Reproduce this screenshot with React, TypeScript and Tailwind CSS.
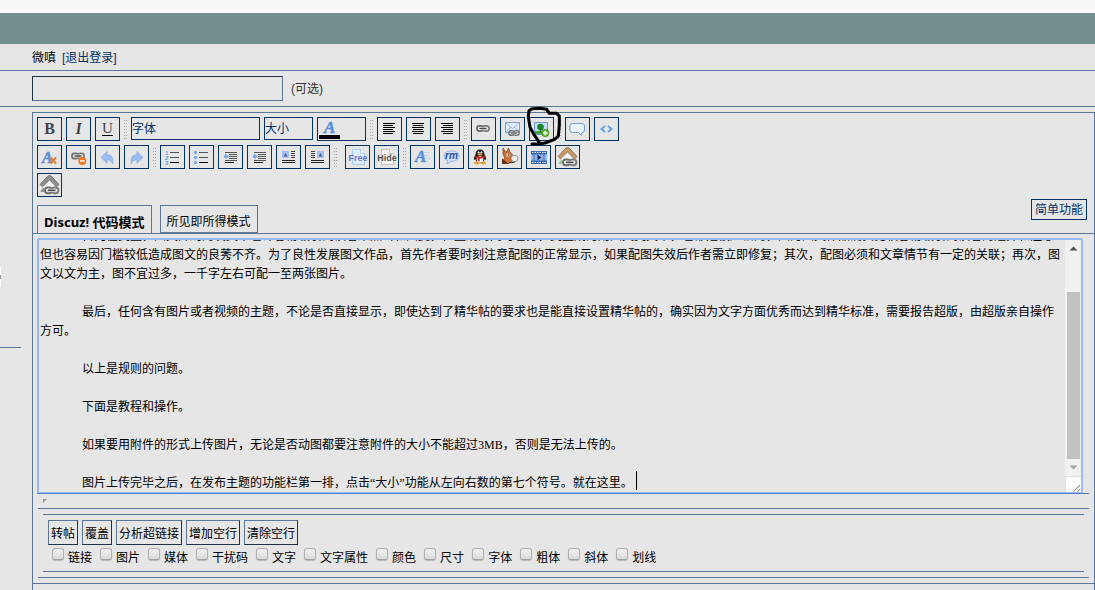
import React, { useEffect, useRef } from 'react';

const draft = [
  '　　　\u2002首先在类型，图文开局的发文不也许容易吸引到读者来点击和回复，但直观的同时也分，类型成为用图文类文本，也都是被严格的，因为图文作品确实比较容易吸引到读者的选择和注意',
  '但也容易因门槛较低造成图文的良莠不齐。为了良性发展图文作品，首先作者要时刻注意配图的正常显示，如果配图失效后作者需立即修复；其次，配图必须和文章情节有一定的关联；再次，图文以文为主，图不宜过多，一千字左右可配一至两张图片。',
  '',
  '　　　\u2002最后，任何含有图片或者视频的主题，不论是否直接显示，即使达到了精华帖的要求也是能直接设置精华帖的，确实因为文字方面优秀而达到精华标准，需要报告超版，由超版亲自操作方可。',
  '',
  '　　　\u2002以上是规则的问题。',
  '',
  '　　　\u2002下面是教程和操作。',
  '',
  '　　　\u2002如果要用附件的形式上传图片，无论是否动图都要注意附件的大小不能超过3MB，否则是无法上传的。',
  '',
  '　　　\u2002图片上传完毕之后，在发布主题的功能栏第一排，点击“大小”功能从左向右数的第七个符号。就在这里。',
].join('\n');

const filters = ['链接', '图片', '媒体', '干扰码', '文字', '文字属性', '颜色', '尺寸', '字体', '粗体', '斜体', '划线'];
const actions = ['转帖', '覆盖', '分析超链接', '增加空行', '清除空行'];

const Icon: React.FC<{ children: React.ReactNode }> = ({ children }) => (
  <svg viewBox="0 0 23 22" className="block h-[22px] w-[23px]" aria-hidden="true">{children}</svg>
);

const Tool: React.FC<{ title: string; children: React.ReactNode }> = ({ title, children }) => (
  <button type="button" title={title} className="h-6 w-[25px] shrink-0 border border-[#003366] overflow-hidden">
    {children}
  </button>
);

const Divider = () => (
  <svg width="3" height="20" className="mt-[3px] shrink-0" aria-hidden="true">
    {[0, 3, 6, 9, 12, 15, 18].map(y => (
      <g key={y} fill="#a9a9a9">
        <rect x="0" y={y} width="1" height="1" />
        <rect x="2" y={y} width="1" height="1" />
      </g>
    ))}
  </svg>
);

const Chain: React.FC<{ x: number; y: number; s?: number }> = ({ x, y, s = 1 }) => (
  <g transform={`translate(${x} ${y}) scale(${s})`} fill="none">
    <rect x="0.9" y="0.9" width="6.4" height="5.2" rx="2.5" stroke="#6d6d6d" strokeWidth="1.7" />
    <rect x="6.7" y="0.9" width="6.4" height="5.2" rx="2.5" stroke="#7b7b7b" strokeWidth="1.7" />
    <path d="M3.5 3.5h7" stroke="#f4f4f4" strokeWidth="2.6" />
    <path d="M3.5 3.5h7" stroke="#4a4a4a" strokeWidth="1.5" />
  </g>
);

const AlignIcon: React.FC<{ align: 'left' | 'center' | 'right' }> = ({ align }) => (
  <Icon>
    {[12, 10, 12, 10, 12, 10].map((w, i) => {
      const x = align === 'left' ? 5 : align === 'center' ? 5 + (12 - w) / 2 : 17 - w;
      return <rect key={i} x={x} y={5 + i * 2} width={w} height="1" fill="#000" />;
    })}
  </Icon>
);

const BlueA: React.FC<{ x: number; y: number; size: number }> = ({ x, y, size }) => (
  <text x={x} y={y} fontFamily="Liberation Serif, serif" fontStyle="italic" fontWeight="bold" fontSize={size} fill="#5b8fdc" stroke="#5b8fdc" strokeWidth="0.5">A</text>
);

const IndentIcon = () => (
  <Icon>
    <path d="M6 6.5h12M10 8.5h8M10 10.5h8M10 12.5h8M6 14.5h12" stroke="#555" />
    <path d="M6 16.5h9" stroke="#111" />
    <path d="M4.500 10.500l3-3v2h2v2h-2v2z" fill="#6ba5ee" />
  </Icon>
);

const FloatIcon: React.FC<{ right?: boolean }> = ({ right }) => (
  <Icon>
    <rect x={right ? 11 : 5} y="5" width="7" height="7" fill="#a3c0ef" />
    <path d={right ? 'M12.500 10.500l2-3.500 2 3.500z' : 'M6.500 10.500l2-3.500 2 3.500z'} fill="#48629a" />
    <path d={right ? 'M5 5.500h4M5 7.500h4M5 9.500h4M5 11.500h4' : 'M14 5.500h4M14 7.500h4M14 9.500h4M14 11.500h4'} stroke="#444" />
    <path d="M5 14.500h13M5 16.500h13" stroke="#222" />
  </Icon>
);

const PageIcon: React.FC<{ label: string; color: string; edge: string; fill: string }> = ({ label, color, edge, fill }) => (
  <Icon>
    <path d="M6.500 3.500h8l4 4v11h-12z" fill={fill} stroke={edge} strokeLinejoin="round" />
    <path d="M14.500 3.500v4h4" fill="#fff" stroke={edge} />
    <text x="12" y="15" textAnchor="middle" fontFamily="Liberation Sans, sans-serif" fontWeight="bold" fontSize="9" fill={color}>{label}</text>
  </Icon>
);

const ListIcon: React.FC<{ numbered?: boolean }> = ({ numbered }) => (
  <Icon>
    {[6, 11, 16].map((y, i) => (
      <g key={y}>
        {numbered
          ? <text x="4" y={y + 3} fontFamily="Liberation Sans, sans-serif" fontWeight="bold" fontSize="6" fill="#5f9de6">{i + 1}</text>
          : <rect x="4" y={y - 1} width="3" height="3" rx="1" fill="#77aaf0" />}
        <rect x="9" y={y} width="9" height="1" fill={i === 2 ? '#000' : '#555'} />
      </g>
    ))}
  </Icon>
);

const HouseIcon: React.FC<{ roof: string; edge: string; leaf: string }> = ({ roof, edge, leaf }) => (
  <Icon>
    <path d="M5 11l6.500-7 6.500 7v6H5z" fill="#f3f3f3" />
    <path d="M2 17.500l4-4v4.500z" fill={leaf} />
    <path d="M2 10.500L10 1.800h3L21 10.500l-2.500 2.300-7-6.800-7 6.800z" fill={roof} stroke={edge} strokeWidth="0.800" />
    <Chain x={6} y={12.5} s={1.1} />
  </Icon>
);

const arrow = 'M5 11.500L11 5.500v3.200c4.500 0 7 3 5.500 9.300-.8-2.800-2.500-4.200-5.500-4.200v3.500z';

const App: React.FC = () => {
  const editor = useRef<HTMLTextAreaElement>(null);

  // keep the end of the draft in view
  useEffect(() => {
    const el = editor.current;
    if (el) el.scrollTop = el.scrollHeight - el.clientHeight - 1;
  }, []);

  return (
    <div className="flex min-h-screen flex-col bg-[#e6e6e6] font-['Liberation_Sans','Noto_Sans_CJK_SC',sans-serif] text-[12px] leading-4 text-black">
      <div className="h-[13px] bg-[#f8f8f8]" />
      <div className="h-[31px] bg-[#748f8f]" />
      <div className="flex h-[27px] items-center gap-1.5 border-b border-[#5a7799] pt-0.5 pl-8">
        <span>微嗔</span>
        <a href="#logout" className="text-[#003366]">[退出登录]</a>
      </div>
      <div className="flex h-9 items-center gap-2 border-b border-[#5a7799] pl-8">
        <input
          type="text" aria-label="标题"
          className="h-[25px] w-[251px] border border-t-[#1f3345] border-l-[#1f3345] border-r-[#5a7799] border-b-[#5a7799] bg-transparent px-1 outline-none"
        />
        <span className="text-[#333]">(可选)</span>
      </div>

      <div className="flex flex-1">
        <aside className="w-8 shrink-0">
          <div className="mt-40 flex h-5 w-px items-center bg-white">
            <div className="h-1 w-px bg-[#999]" />
          </div>
          <div className="mt-15 w-[21px] border-t border-[#5a7799]" />
        </aside>

        <main className="mt-[5px] min-w-0 flex-1 border border-b-0 border-[#5a7799]">
          <div className="flex flex-col gap-1 p-1">
            <div className="flex gap-1">
              <Tool title="粗体"><b className="font-['Liberation_Serif',serif] text-[16px] text-[#444]">B</b></Tool>
              <Tool title="斜体"><b className="font-['Liberation_Serif',serif] text-[16px] italic text-[#444]">I</b></Tool>
              <Tool title="下划线">
                <span className="inline-block h-[15px] border-b border-black font-['Liberation_Serif',serif] text-[15px] leading-[15px] text-[#444]">U</span>
              </Tool>
              <Divider />
              <select aria-label="字体" className="h-[23px] w-[129px] appearance-none border border-[#003366] bg-transparent text-[#003366]">
                <option>字体</option>
              </select>
              <select aria-label="大小" className="h-[23px] w-[49px] appearance-none border border-[#003366] bg-transparent text-[#003366]">
                <option>大小</option>
              </select>
              <button type="button" title="颜色" className="h-6 w-[49px] border border-[#003366]">
                <svg viewBox="0 0 47 22" className="block h-[22px] w-[47px]" aria-hidden="true">
                  <BlueA x={6} y={14.5} size={17} />
                  <rect x="1" y="17" width="21" height="4" fill="#000" />
                </svg>
              </button>
              <Divider />
              <Tool title="左对齐"><AlignIcon align="left" /></Tool>
              <Tool title="居中"><AlignIcon align="center" /></Tool>
              <Tool title="右对齐"><AlignIcon align="right" /></Tool>
              <Divider />
              <Tool title="插入链接"><Icon><Chain x={4} y={7} /></Icon></Tool>
              <Tool title="插入邮箱">
                <Icon>
                  <rect x="4.500" y="4.500" width="14" height="10" fill="#e4eefc" stroke="#7ea2d6" />
                  <path d="M4.500 4.500l7 6 7-6M4.500 14.500l5-5.500M18.500 14.500l-5-5.500" fill="none" stroke="#8fb2e4" />
                  <Chain x={7} y={12} s={0.85} />
                </Icon>
              </Tool>
              <div className="relative h-6">
                <Tool title="插入图片">
                  <Icon>
                    <rect x="4.500" y="4.500" width="13" height="12" fill="#c8ddfb" stroke="#6f9bd8" />
                    <rect x="5" y="13" width="12" height="3" fill="#47a52e" />
                    <circle cx="10.500" cy="9" r="3.300" fill="#168526" />
                    <path d="M10.500 11v3" stroke="#1c5d1c" strokeWidth="1.500" />
                    <circle cx="15.300" cy="15" r="3.700" fill="#5cb032" stroke="#3b8f1f" strokeWidth="0.700" />
                    <path d="M13 15h4.600M15.300 12.700v4.600" stroke="#fff" strokeWidth="1.500" />
                  </Icon>
                </Tool>
                {/* hand-drawn marker around the picture tool */}
                <svg viewBox="345 15 120 132" className="pointer-events-none absolute -left-1 -top-3 h-11 w-10" aria-hidden="true">
                  <path d="M390 130L372 104L360 82L355 50L357 32L366 26L390 25L410 28L418 40L440 40L448 48L448 75L445 108L434 118L405 129L390 131L366 132" fill="none" stroke="#000" strokeWidth="9" strokeLinecap="round" strokeLinejoin="round" />
                </svg>
              </div>
              <Divider />
              <Tool title="引用">
                <Icon>
                  <path d="M6.500 5.500h9.500q2.500 0 2.500 2.500v4q0 2.500-2.500 2.500l-.5 3-3-3h-6q-2.500 0-2.500-2.500V8q0-2.500 2.500-2.500z" fill="#eaf3fe" stroke="#6d9ee0" strokeLinejoin="round" />
                </Icon>
              </Tool>
              <Tool title="代码">
                <Icon><path d="M10 8l-3.500 3 3.500 3M13 8l3.500 3-3.500 3" fill="none" stroke="#62a6ec" strokeWidth="2" /></Icon>
              </Tool>
            </div>

            <div className="flex gap-1">
              <Tool title="清除格式">
                <Icon>
                  <BlueA x={4} y={16.5} size={16} />
                  <path d="M12.500 11.500l5.500 6M18 11.500l-5.500 6" stroke="#e0813a" strokeWidth="2.200" />
                </Icon>
              </Tool>
              <Tool title="移除链接">
                <Icon>
                  <Chain x={4} y={6.5} />
                  <circle cx="15.300" cy="15" r="4" fill="#ee7a20" />
                  <path d="M13 15h4.600" stroke="#fff" strokeWidth="1.500" />
                </Icon>
              </Tool>
              <Tool title="撤销"><Icon><path d={arrow} fill="#9dbdf2" stroke="#80a6e6" strokeWidth="0.700" /></Icon></Tool>
              <Tool title="重做">
                <Icon><path d={arrow} transform="translate(23 0) scale(-1 1)" fill="#9dbdf2" stroke="#80a6e6" strokeWidth="0.700" /></Icon>
              </Tool>
              <Divider />
              <Tool title="编号列表"><ListIcon numbered /></Tool>
              <Tool title="项目列表"><ListIcon /></Tool>
              <Tool title="减少缩进"><IndentIcon /></Tool>
              <Tool title="增加缩进"><IndentIcon /></Tool>
              <Tool title="左浮动"><FloatIcon /></Tool>
              <Tool title="右浮动"><FloatIcon right /></Tool>
              <div className="mr-1 flex"><Divider /></div>
              <Tool title="免费信息"><PageIcon label="Free" color="#6676c8" edge="#a9cdf3" fill="#dfefff" /></Tool>
              <Tool title="隐藏内容"><PageIcon label="Hide" color="#555" edge="#c4c4c4" fill="#f5f5f5" /></Tool>
              <Divider />
              <Tool title="特效文字">
                <Icon>
                  <path d="M8 6.500h11M9 9.500h9M10 12.500h9M10 15.500h8" stroke="#c7daf5" />
                  <BlueA x={4} y={16} size={17} />
                </Icon>
              </Tool>
              <Tool title="RM">
                <Icon>
                  <path d="M11.500 5c4.500 0 7.500 2 7.500 5s-3 5.200-7.500 5.200L7 18l.5-3.500C5 13.500 4 12 4 10c0-3 3-5 7.500-5z" fill="#cfe2fa" stroke="#7da8e2" strokeWidth="0.800" />
                  <text x="11.500" y="13" textAnchor="middle" fontFamily="Liberation Sans, sans-serif" fontStyle="italic" fontWeight="bold" fontSize="10" fill="#1f4f9e">rm</text>
                </Icon>
              </Tool>
              <Tool title="QQ">
                <Icon>
                  <ellipse cx="8" cy="17" rx="3" ry="1.400" fill="#f0a020" />
                  <ellipse cx="14" cy="17" rx="3" ry="1.400" fill="#f0a020" />
                  <path d="M11 3.500c3 0 4.500 2 4.500 5 1 1.500 2 3.500 1.500 5.500l-1.500-.8c-.5 2.300-2 3.800-4.500 3.800s-4-1.500-4.500-3.800L5 14c-.5-2 .5-4 1.500-5.500 0-3 1.500-5 4.500-5z" fill="#222" />
                  <ellipse cx="11" cy="13.500" rx="3.300" ry="3.200" fill="#fff" />
                  <circle cx="9.600" cy="6.500" r="1.100" fill="#fff" />
                  <circle cx="12.400" cy="6.500" r="1.100" fill="#fff" />
                  <ellipse cx="11" cy="8.500" rx="2.400" ry="0.900" fill="#f0a020" />
                  <path d="M6.500 9.800q4.500 2.200 9 0l.3 1.800q-3 1.200-5 1v2.400H8.500v-2.800l-2-.8z" fill="#dd2222" />
                </Icon>
              </Tool>
              <Tool title="电驴">
                <Icon>
                  <path d="M5 2l2.500 4 1.500-.5L10.500 2l1.500 4.500c2 1 2.500 3 4.500 4L15 15l-4.500 2.500h-6L5.500 14l1-2.500L5 8z" fill="#c8733a" stroke="#8a4a1c" strokeWidth="0.800" />
                  <path d="M4 12.500l2.500 2 4 3.300H4z" fill="#5d3018" />
                  <ellipse cx="16.500" cy="12.500" rx="3.500" ry="3.200" fill="#eee" stroke="#777" strokeWidth="0.700" />
                  <circle cx="10" cy="9" r="1.500" fill="#fff" />
                  <circle cx="10.400" cy="9" r="0.700" fill="#000" />
                  <path d="M11 16.500q3 .8 6-.6" stroke="#333" fill="none" />
                </Icon>
              </Tool>
              <Tool title="视频">
                <Icon>
                  <rect x="4" y="5" width="16" height="13" fill="#3c69b4" />
                  <path d="M5 6.500h15M5 16.500h15" stroke="#e8f1ff" strokeWidth="1.200" strokeDasharray="1.500 1" />
                  <rect x="4" y="8.500" width="2.500" height="6" fill="#9bbcf0" />
                  <rect x="7.500" y="8.500" width="9" height="6" fill="#8fb4f0" />
                  <rect x="17.500" y="8.500" width="2.500" height="6" fill="#9bbcf0" />
                  <path d="M10.500 8.800l4 2.700-4 2.700z" fill="#14284c" />
                </Icon>
              </Tool>
              <Tool title="站内链接"><HouseIcon roof="#c79a6b" edge="#8b6238" leaf="#8cc88a" /></Tool>
            </div>

            <div className="flex gap-1">
              <Tool title="站外链接"><HouseIcon roof="#8f8f8f" edge="#6a6a6a" leaf="#8a8a8a" /></Tool>
            </div>
          </div>

          <div className="flex h-[33px] items-start border-b border-[#5a7799] pl-1 pr-[7px]">
            <div className="mt-1 flex items-start gap-2">
              <button type="button" className="h-7 border border-b-0 border-[#5a7799] px-1.5 pt-1 font-['Noto_Sans','Noto_Sans_CJK_SC',sans-serif] text-[13px] font-bold">
                Discuz! 代码模式
              </button>
              <button type="button" className="h-7 border border-[#5a7799] px-1.5 pt-1.5">所见即所得模式</button>
            </div>
            <button type="button" className="-mt-0.5 ml-auto h-[21px] border border-[#003366] px-[3px] pt-px text-[#003366]">简单功能</button>
          </div>

          <div className="pl-1 pr-[5px] pt-1">
            <div className="border-b border-[#5a7799] pr-1.5">
              <div className="relative flex h-[255px] rounded-t-[2px] border-2 border-b border-[#9bbaf5] shadow-[0_1px_0_#4d80d0]">
                <textarea
                  ref={editor} aria-label="内容" defaultValue={draft}
                  className="block h-[252px] min-w-0 flex-1 resize-none overflow-hidden bg-transparent pl-px font-['Liberation_Serif','Noto_Sans_CJK_SC',sans-serif] text-[12px] leading-[19px] outline-none"
                />
                {/* text cursor */}
                <span className="absolute bottom-0.5 left-[597px] h-[19px] w-px bg-black" />
                <div className="flex w-4 flex-col bg-[#f1f1f1]" aria-hidden="true">
                  <svg viewBox="0 0 16 17" className="h-[17px] w-4"><path d="M4.500 10.500h8l-4-4z" fill="#505050" /></svg>
                  <div className="ml-0.5 mr-px mt-[35px] flex-1 bg-[#c1c1c1]" />
                  <svg viewBox="0 0 16 17" className="h-[17px] w-4"><path d="M4.500 6.500h8l-4 4z" fill="#a3a3a3" /></svg>
                  <svg viewBox="0 0 16 16" className="h-4 w-4 border-l border-t border-[#dcdcdc] bg-white">
                    <path d="M8 15.500l7-7M12 15.500l3-3" stroke="#666" />
                  </svg>
                </div>
              </div>
            </div>
          </div>

          <div className="px-[5px]">
            <div className="h-[15px] border-b border-[#5a7799] pl-[5px] pt-[5px]">
              <svg viewBox="0 0 5 5" className="h-[5px] w-[5px]" aria-hidden="true"><path d="M0 0h4L0 4z" fill="#999" /></svg>
            </div>

            <div className="border-b border-[#5a7799] px-[5px] py-[5px]">
              <div className="border-y border-[#5a7799] px-[5px] pt-[5px]">
                <div className="flex gap-1">
                  {actions.map(name => (
                    <button key={name} type="button" className="h-[25px] border border-t-[#5a7799] border-l-[#5a7799] border-r-[#1f3345] border-b-[#1f3345] px-0.5 pt-0.5">
                      {name}
                    </button>
                  ))}
                </div>
                <div className="flex h-[26px] gap-2 pl-1 pt-[3px]">
                  {filters.map(name => (
                    <label key={name} className="flex gap-1">
                      <input type="checkbox" className="h-3 w-3 appearance-none rounded-[3px] border border-[#b2b2b2] border-b-[#a0a0a0] bg-linear-to-b from-[#f0f0f0] to-[#dcdcdc] shadow-[0_1px_1px_#bbb]" />
                      <span className="pt-0.5">{name}</span>
                    </label>
                  ))}
                </div>
              </div>
            </div>
          </div>
          <div className="mt-[5px] border-t border-[#5a7799]" />
        </main>
      </div>
    </div>
  );
};

export default App;
